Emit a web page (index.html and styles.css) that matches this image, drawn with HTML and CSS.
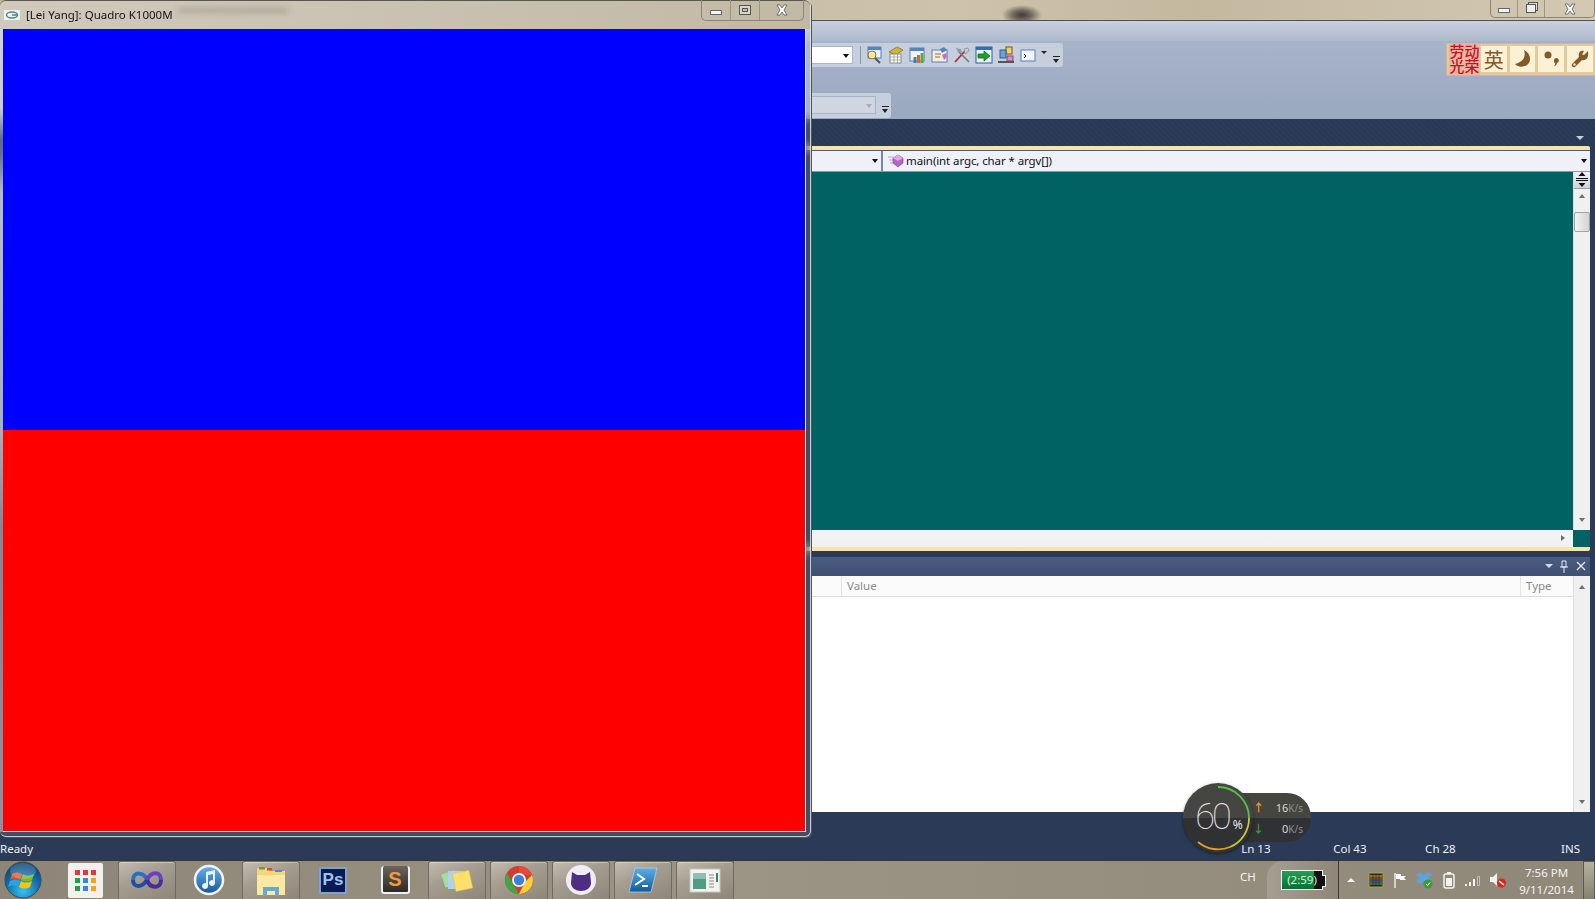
FILE: index.html
```html
<!DOCTYPE html>
<html lang="en">
<head>
  <meta charset="UTF-8">
  <title>Quadro K1000M</title>
  <link rel="stylesheet" href="styles.css">
</head>
<body>
  <div class="desktop">
    <!-- wallpaper strip above the maximized IDE -->
    <div class="wallpaper">
      <div class="caption-btns">
        <span class="cap cap-min"><i class="min-glyph"></i></span>
        <span class="cap cap-max"><i class="restore-glyph"></i></span>
        <span class="cap cap-close"><svg width="16" height="12" viewBox="0 0 16 12"><path d="M3 1h3l2 3 2-3h3L10 6l3 5h-3L8 8l-2 3H3l3-5z" fill="#fff" stroke="#555" stroke-width=".8"/></svg></span>
      </div>
    </div>

    <div class="ide">
      <div class="ide-title"></div>
      <div class="toolbars">
        <div class="tool-row row-one">
          <div class="strip">
            <div class="combo"><span class="drop"></span></div>
            <span class="sep"></span>
            <svg class="tico" viewBox="0 0 18 18"><rect x="3" y="1" width="13" height="11" fill="#eef3fb" stroke="#5c7fb0"/><rect x="3" y="1" width="13" height="3" fill="#4f86c6"/><circle cx="7" cy="9" r="4" fill="#f6e7a8" stroke="#8a7a3a"/><path d="M10 12l5 5" stroke="#555" stroke-width="2"/></svg>
            <svg class="tico" viewBox="0 0 18 18"><path d="M2 6l8-5 6 3-7 5z" fill="#d8b13c" stroke="#7b6420" stroke-width=".7"/><rect x="3" y="8" width="11" height="9" fill="#fff" stroke="#8a8a8a"/><path d="M3 11h11M3 14h11M7 8v9M10.500 8v9" stroke="#9a9a9a" stroke-width=".8"/></svg>
            <svg class="tico" viewBox="0 0 18 18"><rect x="1" y="2" width="14" height="13" fill="#f2f5fb" stroke="#5c7fb0"/><rect x="1" y="2" width="14" height="3" fill="#4f86c6"/><rect x="8" y="9" width="3" height="8" fill="#d8682b"/><rect x="11.500" y="7" width="3" height="10" fill="#5aa83c"/><rect x="4.500" y="11" width="3" height="6" fill="#3f78c4"/></svg>
            <svg class="tico" viewBox="0 0 18 18"><rect x="1" y="4" width="15" height="12" fill="#f4eeda" stroke="#5c7fb0"/><path d="M4 8h6M4 11h5" stroke="#8a6f3a"/><path d="M9 3l4-2 3 3-5 3z" fill="#4f86c6"/><path d="M11 9l4-2 1 4-3 3z" fill="#c86bd0"/></svg>
            <svg class="tico" viewBox="0 0 18 18"><path d="M2 16L12 5" stroke="#a33" stroke-width="1.800"/><path d="M16 16L6 6" stroke="#777" stroke-width="1.600"/><path d="M3 2l5 1 1 4-4-1z" fill="#999"/><path d="M11 3l4-1 1 3-4 3z" fill="#ccc" stroke="#777" stroke-width=".6"/></svg>
            <svg class="tico" viewBox="0 0 18 18"><rect x="1" y="1" width="16" height="16" fill="#e9f0fa" stroke="#2f5e9e"/><rect x="1" y="1" width="16" height="3" fill="#2f6fc0"/><path d="M3 8h6V5l6 5-6 5v-3H3z" fill="#1fa21f" stroke="#0b5d0b" stroke-width=".7"/></svg>
            <svg class="tico" viewBox="0 0 18 18"><rect x="9" y="1" width="6" height="7" fill="#f1d36a" stroke="#6c5a18"/><rect x="3" y="4" width="6" height="8" fill="#6aa2d8" stroke="#2f5e9e"/><rect x="10" y="10" width="6" height="5" fill="#e08ab8" stroke="#8a4a70"/><path d="M1 16h16" stroke="#555" stroke-width="2"/></svg>
            <svg class="tico tico-wide" viewBox="0 0 18 18"><rect x="2" y="4" width="14" height="11" fill="#f2f6fc" stroke="#5c7fb0"/><path d="M5 8l2 2-2 2" fill="none" stroke="#222"/></svg>
            <span class="mini-drop"></span>
            <span class="grip"></span>
          </div>
          <div class="ime-bar">
            <span class="ime-cell ime-logo">劳动光荣</span>
            <span class="ime-cell ime-lang">英</span>
            <span class="ime-cell"><svg width="20" height="20" viewBox="0 0 20 20"><path d="M12 1c2 6 0 12-9 14 4 5 15 3 15-5 0-4-2-7-6-9z" fill="#83592a"/></svg></span>
            <span class="ime-cell"><svg width="20" height="20" viewBox="0 0 20 20"><circle cx="7" cy="6" r="3.500" fill="#83592a"/><path d="M13 11a2.500 2.500 0 1 1 3 3c-.3 2-1.500 3-3 3 .8-.8 1.200-1.500 1.200-2.500-.8-.5-1.400-2-1.200-3.500z" fill="#83592a"/></svg></span>
            <span class="ime-cell"><svg width="20" height="20" viewBox="0 0 20 20"><path d="M18 2l-4 4-2-.5L14 2c-4-1-6 2-5 6l-7 7c-1 2 1 4 3 3l7-7c4 1 7-2 6-9z" fill="#83592a"/><circle cx="4.500" cy="15.500" r="1.200" fill="#f8edc9"/></svg></span>
          </div>
        </div>
        <div class="tool-row row-two">
          <div class="strip strip-two">
            <div class="combo combo-off"><span class="drop"></span></div>
            <span class="grip"></span>
          </div>
        </div>
      </div>

      <div class="doc-tabs"><span class="tab-menu"></span></div>
      <div class="doc-well">
        <div class="nav-bar">
          <div class="nav-left"><span class="drop"></span></div>
          <div class="nav-right">
            <svg class="member-ico" width="16" height="14" viewBox="0 0 16 14"><path d="M0 3h5M1 6h4M2 9h3" stroke="#b9a5c9"/><path d="M10 1l5 3v5l-5 4-5-4V4z" fill="#b565c4" stroke="#7b3f8a" stroke-width=".6"/><path d="M10 1l5 3-5 3-5-3z" fill="#e3a8ea"/></svg>
            <span class="member-name">main(int argc, char * argv[])</span>
            <span class="drop"></span>
          </div>
        </div>
        <div class="editor">
          <div class="code-area"></div>
          <div class="vscroll">
            <span class="split-btn"><svg width="12" height="15" viewBox="0 0 12 15"><path d="M6 0l3.500 4h-7zM6 15l3.500-4h-7z" fill="#111"/><path d="M0 6.500h12M0 8.500h12" stroke="#111"/></svg></span>
            <span class="arrow-up"></span>
            <span class="thumb"></span>
            <span class="arrow-down"></span>
          </div>
        </div>
        <div class="hscroll-row">
          <div class="hscroll"><span class="arrow-right"></span></div>
          <div class="corner"></div>
        </div>
      </div>

      <div class="tool-pane">
        <div class="pane-head">
          <span class="head-drop"></span>
          <svg width="10" height="13" viewBox="0 0 10 13"><path d="M3 1h4v6H3zM1 7h8M5 7v6" fill="none" stroke="#e6ebf3"/></svg>
          <svg width="12" height="12" viewBox="0 0 12 12"><path d="M2 2l8 8M10 2l-8 8" stroke="#e6ebf3" stroke-width="1.300"/></svg>
        </div>
        <div class="pane-main">
          <div class="grid-area">
            <div class="grid-head">
              <span class="col col-name"></span>
              <span class="col col-value">Value</span>
              <span class="col col-type">Type</span>
            </div>
          </div>
          <div class="vscroll vscroll-plain">
            <span class="arrow-up"></span>
            <span class="arrow-down"></span>
          </div>
        </div>
      </div>

      <div class="status-gap"></div>
      <div class="statusbar">
        <span class="st-ready">Ready</span>
        <span class="st-cell">Ln 13</span>
        <span class="st-cell">Col 43</span>
        <span class="st-cell st-ch">Ch 28</span>
        <span class="st-ins">INS</span>
      </div>
    </div>

    <div class="taskbar">
      <div class="start-orb">
        <svg width="38" height="38" viewBox="0 0 38 38">
          <defs><radialGradient id="orb" cx=".5" cy=".8" r=".8"><stop offset="0" stop-color="#39c2ee"/><stop offset=".6" stop-color="#0f6aa8"/><stop offset="1" stop-color="#0b3a66"/></radialGradient></defs>
          <circle cx="19" cy="19" r="18" fill="url(#orb)" stroke="#3c4a55"/>
          <path d="M8 13c3-2 6-2 10 0l-2 6c-3-2-7-2-10 0z" fill="#ef5a23"/>
          <path d="M19 13c3 2 7 2 11 0l-2 6c-3 2-7 2-11 0z" fill="#7fba2a"/>
          <path d="M6 20c3-2 6-2 10 0l-2 6c-3-2-7-2-10 0z" fill="#2aa3e3"/>
          <path d="M17 20c3 2 7 2 11 0l-2 6c-4 2-7 2-11 0z" fill="#fdc013"/>
          <ellipse cx="19" cy="10" rx="13" ry="8" fill="#fff" opacity=".18"/>
        </svg>
      </div>
      <div class="tb-item">
        <span class="apps-tile"><i class="c-r"></i><i class="c-r"></i><i class="c-r"></i><i class="c-g"></i><i class="c-b"></i><i class="c-o"></i><i class="c-g"></i><i class="c-b"></i><i class="c-o"></i></span>
      </div>
      <div class="tb-item running">
        <svg width="34" height="20" viewBox="0 0 34 20"><path d="M3 10c0-9 11-8 14 0" fill="none" stroke="#2a6fc4" stroke-width="4"/><path d="M3 10c0 8 9 8 14 0" fill="none" stroke="#1d4f9e" stroke-width="4"/><path d="M17 10c4-9 14-9 14 0" fill="none" stroke="#6b3fc0" stroke-width="4"/><path d="M17 10c3 9 14 9 14 0" fill="none" stroke="#4a2a9a" stroke-width="4"/></svg>
      </div>
      <div class="tb-item">
        <svg width="32" height="32" viewBox="0 0 32 32"><defs><linearGradient id="tun" x1="0" y1="0" x2="0" y2="1"><stop offset="0" stop-color="#63b4ec"/><stop offset="1" stop-color="#14549e"/></linearGradient></defs><circle cx="16" cy="16" r="14" fill="url(#tun)" stroke="#f2f5f8" stroke-width="2.500"/><path d="M13 8l9-2v13a3 3 0 1 1-2-2.800V10l-5 1v11a3 3 0 1 1-2-2.800z" fill="#e9f2fb"/></svg>
      </div>
      <div class="tb-item running">
        <svg width="34" height="34" viewBox="0 0 34 34"><path d="M3 5h11l2 3h15v24H3z" fill="#f3d675"/><path d="M3 12h28v20H3z" fill="#fbe9a2"/><rect x="5" y="4" width="6" height="2.500" fill="#58a34a"/><rect x="13" y="5" width="5" height="2.500" fill="#d24b3c"/><rect x="21" y="7" width="7" height="2" fill="#4f8cc9"/><path d="M9 33V24h16v9h-4v-5H13v5z" fill="#62a8d8"/></svg>
      </div>
      <div class="tb-item"><span class="ps-tile">Ps</span></div>
      <div class="tb-item"><span class="subl-tile">S</span></div>
      <div class="tb-item running">
        <svg width="34" height="28" viewBox="0 0 34 28"><rect x="3" y="6" width="14" height="14" transform="rotate(-18 10 13)" fill="#a6dd9e"/><rect x="8" y="5" width="16" height="18" fill="#aed3f2"/><rect x="14" y="6" width="17" height="18" transform="rotate(-12 22 15)" fill="#fbe06c" stroke="#dcc04a" stroke-width=".5"/></svg>
      </div>
      <div class="tb-item running">
        <svg width="32" height="32" viewBox="0 0 32 32"><circle cx="16" cy="16" r="14" fill="#d33c30"/><path d="M16 2a14 14 0 0 1 13 9H16z" fill="#e24b3c"/><path d="M29 11a14 14 0 0 1-13 19l6-12z" fill="#fdd034"/><path d="M16 30A14 14 0 0 1 4 9l7 13z" fill="#3ba948"/><circle cx="16" cy="16" r="7" fill="#f1f1f1"/><circle cx="16" cy="16" r="5.200" fill="#3c80d8"/></svg>
      </div>
      <div class="tb-item running">
        <svg width="32" height="32" viewBox="0 0 32 32"><circle cx="16" cy="16" r="15" fill="#f0eef5"/><path d="M7 8l5 3h8l5-3 1 11c0 5-5 8-10 8S6 24 6 19z" fill="#4f2d85"/></svg>
      </div>
      <div class="tb-item running">
        <svg width="30" height="26" viewBox="0 0 30 26"><defs><linearGradient id="psh" x1="0" y1="0" x2="0" y2="1"><stop offset="0" stop-color="#5ab0e6"/><stop offset="1" stop-color="#125a9e"/></linearGradient></defs><path d="M7 1h22l-6 24H1z" fill="url(#psh)" stroke="#bcd9ef" stroke-width=".7"/><path d="M9 7l7 5-9 6M14 19h6" fill="none" stroke="#fff" stroke-width="2"/></svg>
      </div>
      <div class="tb-item running tb-last">
        <svg width="32" height="26" viewBox="0 0 32 26"><rect x="1" y="2" width="30" height="23" fill="#f3f4f2" stroke="#c6c8c2"/><rect x="4" y="6" width="13" height="16" fill="#4f9d84"/><rect x="4" y="6" width="13" height="6" fill="#8cc1b0"/><path d="M20 8h5M20 11h5M20 14h5M20 17h5M20 20h5" stroke="#888"/><rect x="27" y="6" width="2" height="9" fill="#2f8a5f"/></svg>
      </div>
      <span class="tb-end"></span>

      <div class="tray">
        <span class="tray-lang">CH</span>
        <div class="tray-battery">
          <span class="batt"><span class="batt-fill"></span><span class="batt-text">(2:59)</span></span>
        </div>
        <div class="tray-icons">
          <span class="tray-arrow"></span>
          <svg width="16" height="16" viewBox="0 0 16 16"><rect x="1" y="1" width="14" height="14" fill="#2c2a20" stroke="#9eae3c"/><path d="M2 4h12" stroke="#e8c53c"/><path d="M2 6h12" stroke="#d8653c"/><path d="M2 8h12" stroke="#a84fc0"/><path d="M2 10h12" stroke="#3c8fd8"/><path d="M2 12h12" stroke="#3cc06a"/><path d="M5 2v12M8 2v12M11 2v12" stroke="#222" stroke-width=".6"/></svg>
          <svg width="16" height="16" viewBox="0 0 16 16"><path d="M3 1v15" stroke="#eee" stroke-width="1.400"/><path d="M4 2h5v2h5l-2 2 2 2H8V7H4z" fill="#fff"/></svg>
          <svg width="18" height="18" viewBox="0 0 18 18"><path d="M5 1L1 4l4 3-4 3 4 3 4-3 4 3 4-3-4-3 4-3-4-3-4 3z" fill="#5aa5e0"/><circle cx="13" cy="13" r="4.500" fill="#3c9a3c"/><path d="M11 13l1.500 1.500L15 11.500" fill="none" stroke="#fff"/></svg>
          <svg width="14" height="18" viewBox="0 0 14 18"><rect x="2" y="3" width="10" height="14" rx="2" fill="none" stroke="#f4f4f0" stroke-width="1.500"/><rect x="5" y="1" width="4" height="2" fill="#f4f4f0"/><rect x="4" y="7" width="6" height="8" fill="#f4f4f0"/></svg>
          <svg width="18" height="14" viewBox="0 0 18 14"><path d="M1 11h2v2H1zM5 9h2v4H5zM9 6h2v7H9z" fill="#f4f4f0"/><path d="M13.500 3.500h2v9h-2z" fill="none" stroke="#ccc" stroke-width=".8"/></svg>
          <svg width="18" height="16" viewBox="0 0 18 16"><path d="M1 5h3l4-4v13l-4-4H1z" fill="#f2f2ee"/><circle cx="12.500" cy="11" r="4.500" fill="#d8261e"/><path d="M10 9l5 4" stroke="#fff" stroke-width="1.400"/></svg>
        </div>
        <div class="clock"><span>7:56 PM</span><span>9/11/2014</span></div>
        <span class="show-desktop"></span>
      </div>
    </div>

    <!-- floating GL window sits over the IDE -->
    <div class="gl-window">
      <div class="gl-title">
        <svg class="gl-ico" width="16" height="10" viewBox="0 0 16 10"><rect width="16" height="10" fill="#eef3f0"/><ellipse cx="8" cy="5" rx="5.500" ry="3" fill="none" stroke="#4d8a86" stroke-width="1.500"/><path d="M8 5h6" stroke="#4d8a86" stroke-width="1.500"/></svg>
        <span class="gl-name">[Lei Yang]: Quadro K1000M</span>
        <span class="gl-smudge"></span>
        <div class="caption-btns gl-caps">
          <span class="cap cap-min"><i class="min-glyph"></i></span>
          <span class="cap cap-max"><i class="max-glyph"></i></span>
          <span class="cap cap-close"><svg width="16" height="12" viewBox="0 0 16 12"><path d="M3 1h3l2 3 2-3h3L10 6l3 5h-3L8 8l-2 3H3l3-5z" fill="#fff" stroke="#555" stroke-width=".8"/></svg></span>
        </div>
      </div>
      <div class="gl-client">
        <div class="gl-half gl-blue"></div>
        <div class="gl-half gl-red"></div>
      </div>
    </div>

    <!-- system monitor gadget -->
    <div class="gadget">
      <div class="gadget-pill">
        <div class="rate"><span class="rate-up">↑</span><span class="rate-num">16<small>K/s</small></span></div>
        <div class="rate"><span class="rate-down">↓</span><span class="rate-num">0<small>K/s</small></span></div>
      </div>
      <div class="gadget-dial">
        <svg class="dial-arc" width="70" height="70" viewBox="0 0 70 70">
          <path d="M35 4A31 31 0 0 1 66 35" fill="none" stroke="#58c04a" stroke-width="1.800"/>
          <path d="M66 35A31 31 0 0 1 47 64" fill="none" stroke="#c8c83a" stroke-width="1.800"/>
          <path d="M47 64A31 31 0 0 1 15 59" fill="none" stroke="#e8a020" stroke-width="1.800"/>
        </svg>
        <span class="dial-num">60</span><span class="dial-pct">%</span>
      </div>
    </div>
  </div>
</body>
</html>
```

FILE: styles.css
```css
* {
  box-sizing: border-box;
}

html, body {
  margin: 0;
  padding: 0;
  height: 899px;
  overflow: hidden;
}

body {
  font-family: "Noto Sans", "Noto Sans CJK SC", sans-serif;
  font-size: 11.500px;
  color: #111;
}

.desktop {
  position: relative;
  display: flex;
  flex-direction: column;
  width: 1595px;
  height: 899px;
}

/* wallpaper + caption buttons */
.wallpaper {
  height: 21px;
  display: flex;
  justify-content: flex-end;
  background:
    radial-gradient(ellipse 20px 10px at 1022px 15px, rgba(40,36,32,.85) 0, rgba(50,46,40,.6) 45%, rgba(60,55,50,0) 100%),
    linear-gradient(90deg, #bcb199 0, #cdc2aa 60%, #c4b89f 75%, #d3c9b3 100%);
  border-bottom: 1px solid #4e5059;
}

.caption-btns {
  display: flex;
  height: 18px;
  width: 105px;
  border: 1px solid #8a8576;
  border-top: none;
  border-radius: 0 0 5px 5px;
}

.cap {
  display: flex;
  align-items: center;
  justify-content: center;
  width: 27px;
  border-right: 1px solid #9a9585;
}

.cap-close {
  flex: 1;
  border-right: none;
}

.min-glyph {
  display: block;
  width: 12px;
  height: 5px;
  margin-top: 4px;
  background: #f4f4f4;
  border: 1px solid #666;
}

.max-glyph {
  display: block;
  width: 12px;
  height: 10px;
  border: 1px solid #555;
  box-shadow: inset 0 0 0 2px #d8d4c8, inset 0 0 0 3px #555;
}

.restore-glyph {
  display: block;
  width: 10px;
  height: 9px;
  background: #eee;
  border: 1px solid #555;
  box-shadow: 2px -2px 0 -1px #ddd, 2px -2px 0 0 #555;
}

/* IDE */
.ide {
  height: 840px;
  display: flex;
  flex-direction: column;
  background: #2a3a57;
  color: #eef2f8;
}

.ide-title {
  height: 20px;
  background: linear-gradient(#c9d0df, #aeb9cd);
}

.toolbars {
  height: 78px;
  background: linear-gradient(#a7b3c9, #9aa8c0);
  padding-left: 811px;
}

.tool-row {
  display: flex;
  justify-content: space-between;
}

.row-one {
  height: 52px;
  padding-top: 2px;
}

.row-two {
  height: 26px;
}

.strip {
  display: flex;
  align-items: center;
  width: 252px;
  height: 24px;
  background: #c6cfdd;
  border-radius: 0 3px 3px 0;
}

.strip-two {
  width: 80px;
  height: 25px;
  justify-content: space-between;
}

.combo {
  position: relative;
  width: 42px;
  height: 18px;
  background: #fff;
  border: 1px solid #a9b4c6;
  border-left: none;
}

.combo-off {
  width: 65px;
  background: #d0d6e1;
}

.drop {
  display: block;
  width: 0;
  height: 0;
  border: 3px solid transparent;
  border-top: 4px solid #111;
  border-bottom: none;
}

.combo .drop {
  position: absolute;
  right: 3px;
  top: 7px;
}

.combo-off .drop {
  border-top-color: #a3adbd;
}

.sep {
  width: 1px;
  height: 18px;
  margin: 0 4px 0 7px;
  background: #8995a8;
}

.tico {
  width: 18px;
  height: 18px;
  margin-right: 4px;
}

.tico-wide {
  margin-right: 2px;
}

.mini-drop {
  width: 0;
  height: 0;
  margin: -4px 4px 0 2px;
  border: 3px solid transparent;
  border-top: 3px solid #222;
  border-bottom: none;
}

.grip {
  display: block;
  width: 7px;
  height: 6px;
  margin: 8px 2px 0 2px;
  border-top: 1px solid #222;
  border-bottom: 4px solid transparent;
  position: relative;
}

.grip::after {
  content: "";
  position: absolute;
  left: 0;
  top: 2px;
  border: 3.500px solid transparent;
  border-top: 4px solid #222;
  border-bottom: none;
}

.ime-bar {
  display: flex;
  gap: 3px;
  align-items: center;
  width: 149px;
  height: 33px;
  padding: 0 2px;
  background: #e2cb9b;
  border: 1px solid #cdb98f;
  border-right: none;
}

.ime-cell {
  display: flex;
  align-items: center;
  justify-content: center;
  width: 26px;
  height: 26px;
  background: #fbf2d6;
  color: #83592a;
}

.ime-lang {
  font-size: 20px;
}

.ime-logo {
  width: 31px;
  height: 31px;
  margin-right: -2px;
  background: #e8b8a0;
  color: #c4112c;
  font-size: 15px;
  font-weight: 500;
  line-height: 15px;
  text-align: center;
}

.doc-tabs {
  position: relative;
  height: 27px;
  background: repeating-linear-gradient(45deg, #2c3b58 0 2px, #2a3854 2px 4px);
}

.tab-menu {
  position: absolute;
  right: 11px;
  top: 17px;
  border: 4px solid transparent;
  border-top: 4px solid #c8d0de;
  border-bottom: none;
}

.doc-well {
  margin-right: 5px;
  padding-left: 811px;
  border-top: 4px solid #f8e3ad;
  border-bottom: 4px solid #f8e3ad;
  border-radius: 0 2px 2px 0;
}

.nav-bar {
  display: flex;
  height: 22px;
  background: #f0f1f8;
  border-top: 1px solid #4e5d70;
  border-bottom: 1px solid #8d97a6;
}

.nav-left {
  display: flex;
  align-items: center;
  justify-content: flex-end;
  width: 72px;
  padding-right: 3px;
  border-right: 2px solid #7d8794;
}

.nav-right {
  flex: 1;
  display: flex;
  align-items: center;
  padding: 0 3px 0 5px;
  color: #111;
}

.member-ico {
  margin-right: 2px;
}

.member-name {
  flex: 1;
  letter-spacing: -.1px;
}

.editor {
  display: flex;
  height: 358px;
}

.code-area {
  flex: 1;
  background: #006262;
}

.vscroll {
  position: relative;
  width: 17px;
  background: #f0f0f0;
  border-left: 1px solid #dcdcdc;
}

.split-btn {
  display: flex;
  align-items: center;
  justify-content: center;
  height: 17px;
  background: linear-gradient(#f2f4f8, #cdd2dc);
  border-bottom: 1px solid #98a0ae;
}

.arrow-up, .arrow-down {
  position: absolute;
  left: 5px;
  border: 3px solid transparent;
}

.arrow-up {
  top: 22px;
  border-bottom: 4px solid #6d6d6d;
  border-top: none;
}

.arrow-down {
  bottom: 8px;
  border-top: 4px solid #6d6d6d;
  border-bottom: none;
}

.thumb {
  position: absolute;
  left: 0;
  top: 40px;
  width: 16px;
  height: 20px;
  background: linear-gradient(90deg, #f4f4f4, #d2d2d2);
  border: 1px solid #a3a3a3;
  border-radius: 2px;
}

.vscroll-plain .arrow-up {
  top: 9px;
}

.hscroll-row {
  display: flex;
  height: 17px;
}

.hscroll {
  flex: 1;
  display: flex;
  align-items: center;
  justify-content: flex-end;
  padding-right: 8px;
  background: linear-gradient(#edf4f9, #f5f1ed);
}

.arrow-right {
  border: 3px solid transparent;
  border-left: 4px solid #6d6d6d;
  border-right: none;
}

.corner {
  width: 17px;
  background: #006262;
}

.tool-pane {
  margin: 6px 5px 0 0;
  padding-left: 811px;
}

.pane-head {
  display: flex;
  align-items: center;
  justify-content: flex-end;
  gap: 6px;
  height: 19px;
  padding-right: 3px;
  background: linear-gradient(#4a5c80, #3f5074);
}

.head-drop {
  border: 4px solid transparent;
  border-top: 4px solid #d6dde8;
  border-bottom: none;
}

.pane-main {
  display: flex;
  height: 236px;
}

.grid-area {
  flex: 1;
  background: #fff;
}

.grid-head {
  display: flex;
  height: 21px;
  background: #fbfbfb;
  border-bottom: 1px solid #dcdcdc;
  color: #8a8a8a;
}

.col {
  display: flex;
  align-items: center;
  height: 20px;
  padding-left: 5px;
}

.col-name {
  width: 31px;
  padding: 0;
  border-right: 1px solid #e3e3e3;
}

.col-value {
  width: 679px;
  border-right: 1px solid #e3e3e3;
}

.col-type {
  flex: 1;
}

.status-gap {
  flex: 1;
}

.statusbar {
  display: flex;
  align-items: center;
  height: 23px;
  padding-right: 15px;
  color: #eef2f8;
}

.st-ready {
  width: 1242px;
}

.st-cell {
  width: 92px;
}

.st-ch {
  width: 136px;
}

/* taskbar */
.taskbar {
  flex: 1;
  display: flex;
  background: linear-gradient(90deg, #8d8678 0, #9c9484 45%, #8f8879 100%);
  border-top: 1px solid #35363a;
}

.start-orb {
  width: 54px;
  padding: 0 0 0 4px;
  display: flex;
  align-items: center;
}

.tb-item {
  position: relative;
  display: flex;
  align-items: center;
  justify-content: center;
  width: 62px;
}

.tb-item.running::before {
  content: "";
  position: absolute;
  inset: 0 2px;
  background: linear-gradient(155deg, #c3bcb0 0, #a49d90 40%, #8d8779 100%);
  border: 1px solid #6f6b62;
  border-bottom: none;
  border-radius: 3px 3px 0 0;
  box-shadow: inset 0 1px 0 rgba(255,255,255,.35);
}

.tb-item svg, .tb-item span {
  position: relative;
}

.tb-last::before {
  right: 7px;
}

.tb-end {
  width: 1px;
  margin-left: -3px;
  background: #6f6b62;
}

.apps-tile {
  display: grid;
  grid-template-columns: repeat(3, 5px);
  gap: 3px;
  padding: 7px;
  background: #f3f1ee;
  border-radius: 2px;
}

.apps-tile i {
  height: 5px;
}

.c-r { background: #d83c32; }
.c-g { background: #2e9a48; }
.c-b { background: #3a86d8; }
.c-o { background: #f2a421; }

.ps-tile {
  display: flex;
  align-items: center;
  justify-content: center;
  width: 28px;
  height: 27px;
  background: #0c1a54;
  border: 2px solid #7ea0d4;
  color: #9cc4f2;
  font-family: "Liberation Sans", sans-serif;
  font-size: 17px;
  font-weight: 700;
}

.subl-tile {
  display: flex;
  align-items: center;
  justify-content: center;
  width: 29px;
  height: 28px;
  background: linear-gradient(#6a655e, #2c2a28);
  border: 2px solid #f0f0f0;
  border-top: none;
  border-radius: 3px;
  color: #f09a3c;
  font-family: "Liberation Sans", sans-serif;
  font-size: 20px;
  font-weight: 700;
}

.tray {
  margin-left: auto;
  display: flex;
  width: 370px;
  color: #f4f4f0;
}

.tray-lang {
  width: 42px;
  padding: 8px 0 0 15px;
}

.tray-battery {
  display: flex;
  align-items: center;
  width: 72px;
  padding-left: 14px;
  background: linear-gradient(90deg, #a69e90, #8e8778);
  border-top-left-radius: 16px;
  border-right: 1px solid #3b3a36;
}

.batt {
  position: relative;
  display: block;
  width: 42px;
  height: 20px;
  background: #111;
  border: 1px solid #f4f4f4;
}

.batt::after {
  content: "";
  position: absolute;
  right: -4px;
  top: 4px;
  width: 3px;
  height: 10px;
  background: #111;
  border: 1px solid #f4f4f0;
  border-left: none;
}

.batt-fill {
  position: absolute;
  left: 0;
  top: 0;
  bottom: 0;
  width: 32px;
  background: linear-gradient(#1fa254, #0c6f34);
}

.batt-text {
  position: relative;
  display: block;
  text-align: center;
  line-height: 18px;
  color: #d4f2dc;
  white-space: nowrap;
}

.tray-icons {
  display: grid;
  grid-template-columns: repeat(7, 24.400px);
  align-items: center;
  justify-items: center;
  width: 176px;
}

.tray-arrow {
  border: 4px solid transparent;
  border-bottom: 4px solid #f4f4f0;
  border-top: none;
}

.clock {
  display: flex;
  flex-direction: column;
  align-items: center;
  width: 68px;
  padding: 3px 5px 0 0;
  line-height: 17px;
}

.show-desktop {
  flex: 1;
  background: linear-gradient(#b7b1a4, #86806f);
  border: 1px solid #5d5a52;
  border-bottom: none;
}

/* GL window */
.gl-window {
  position: absolute;
  left: 0;
  top: 0;
  width: 811px;
  height: 837px;
  padding: 0 5px 4px 3px;
  background: rgba(255,255,255,.1);
  -webkit-backdrop-filter: blur(4px);
  backdrop-filter: blur(4px);
  border-right: 1px solid rgba(225,228,228,.85);
  border-bottom: 1px solid rgba(225,228,228,.85);
  border-radius: 6px;
  box-shadow: 1px 1px 0 #50555c;
}

/* left edge of the glass, the IDE under it is not drawn so it gets its own tones */
.gl-window::before {
  content: "";
  position: absolute;
  left: 0;
  top: 29px;
  bottom: 4px;
  width: 3px;
  background: linear-gradient(#d0d3d8 0, #c8ccd2 80px, #5d6880 112px, #66718a 125px, #b8bdc8 165px, #a9afbb 400px, #7f8798 500px, #8a91a0 100%);
}

.gl-title {
  position: relative;
  display: flex;
  align-items: center;
  height: 29px;
  margin: 0 -5px 0 -3px;
  padding: 0 6px 0 4px;
  background: linear-gradient(90deg, #cfcabd 0, #c9c3b4 45%, #c2b9a4 100%);
  border-top: 1px solid #5a574e;
  border-radius: 6px 6px 0 0;
}

.gl-ico {
  margin-right: 6px;
}

.gl-name {
  flex: 1;
  color: #15140f;
  margin-top: -2px;
}

.gl-smudge {
  position: absolute;
  left: 178px;
  top: 7px;
  width: 110px;
  height: 5px;
  background: #8a8474;
  filter: blur(3px);
  opacity: .5;
}

.gl-caps {
  position: absolute;
  right: 6px;
  top: -1px;
  width: 103px;
  height: 21px;
}

.gl-caps .cap {
  width: 29px;
}

.gl-caps .cap-close {
  flex: 1;
}

.gl-client {
  width: 802px;
  height: 802px;
  display: flex;
  flex-direction: column;
  outline: 1px solid #e4e8ea;
}

.gl-half {
  flex: 1;
}

.gl-blue { background: #0000ff; }
.gl-red { background: #ff0000; }

/* gadget */
.gadget {
  position: absolute;
  left: 1183px;
  top: 783px;
  width: 130px;
  height: 70px;
}

.gadget-pill {
  position: absolute;
  left: 40px;
  top: 10px;
  width: 88px;
  height: 49px;
  padding: 7px 8px 0 30px;
  background: linear-gradient(#45463f 0, #45463f 50%, #303134 50%, #303134 100%);
  border-radius: 0 24px 24px 0;
  color: #d8d8d8;
  font-size: 11px;
}

.rate {
  display: flex;
  justify-content: space-between;
  height: 21px;
  line-height: 16px;
}

.rate-up { color: #e89a2a; font-weight: 700; }
.rate-down { color: #3c9a3c; font-weight: 700; }

.rate small {
  font-size: 10px;
  color: #8f8f8f;
}

.gadget-dial {
  position: absolute;
  left: 0;
  top: 0;
  display: flex;
  align-items: baseline;
  justify-content: center;
  width: 70px;
  height: 70px;
  padding: 14px 0 0 2px;
  background: linear-gradient(#454541 0, #454541 50%, #303133 50%, #303133 100%);
  border-radius: 50%;
  box-shadow: 0 1px 3px rgba(0,0,0,.5);
  color: #e8e8e8;
}

.dial-arc {
  position: absolute;
  left: 0;
  top: 0;
}

.dial-num {
  font-family: Roboto, sans-serif;
  font-size: 36px;
  font-weight: 100;
  line-height: 40px;
  letter-spacing: -3px;
}

.dial-pct {
  font-size: 12px;
  margin-left: 4px;
}
```
